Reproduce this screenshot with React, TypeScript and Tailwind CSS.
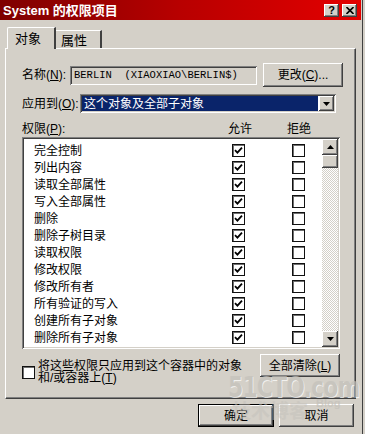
import React from "react";

const sunken =
  "shadow-[inset_1px_1px_0_#808080,inset_-1px_-1px_0_#ffffff,inset_2px_2px_0_#404040,inset_-2px_-2px_0_#d4d0c8]";
const raised =
  "shadow-[inset_-1px_-1px_0_#404040,inset_1px_1px_0_#ffffff,inset_-2px_-2px_0_#808080,inset_2px_2px_0_#d4d0c8]";

function Check({ checked }: { checked: boolean }) {
  return (
    <div className="w-[13px] h-[13px] bg-white border border-[#111] shadow-[inset_1px_1px_0_#707070] flex items-center justify-center">
      {checked && (
        <svg width="9" height="9" viewBox="0 0 9 9">
          <path d="M1 4.2 L3.4 6.6 L8 1.6" stroke="#000" strokeWidth="1.8" fill="none" />
        </svg>
      )}
    </div>
  );
}

function Arrow({ up }: { up: boolean }) {
  return (
    <div className={`w-[16px] h-[16px] bg-[#d4d0c8] ${raised} flex items-center justify-center`}>
      <svg width="7" height="4" viewBox="0 0 7 4">
        {up ? <path d="M3.5 0 L7 4 L0 4 Z" fill="#000" /> : <path d="M0 0 L7 0 L3.5 4 Z" fill="#000" />}
      </svg>
    </div>
  );
}

const rows = [
  "完全控制",
  "列出内容",
  "读取全部属性",
  "写入全部属性",
  "删除",
  "删除子树目录",
  "读取权限",
  "修改权限",
  "修改所有者",
  "所有验证的写入",
  "创建所有子对象",
  "删除所有子对象",
];

export default function App() {
  return (
    <div className="relative w-[365px] h-[434px] overflow-hidden bg-[#d4d0c8] text-black text-[12px] leading-none font-['Liberation_Sans','Noto_Sans_CJK_SC',sans-serif]">
      <div className="w-[363px] h-[434px] border-r border-[#404040] flex flex-col">
        {/* Title bar */}
        <div className="h-[20px] w-[361px] bg-gradient-to-r from-[#7e0000] via-[#b80000] to-[#e40000] flex items-center pl-[3px] pr-[4px]">
          <span className="text-white font-bold text-[13px]">System 的权限项目</span>
          <div className="ml-auto flex gap-[3px] items-center">
            <div className={`w-[15px] h-[13px] bg-[#d4d0c8] ${raised} flex items-center justify-center text-[11px] font-bold`}>?</div>
            <div className={`w-[15px] h-[13px] bg-[#d4d0c8] ${raised} flex items-center justify-center`}>
              <svg width="8" height="7" viewBox="0 0 8 7">
                <path d="M0.5 0 L7.5 7 M7.5 0 L0.5 7" stroke="#000" strokeWidth="1.6" />
              </svg>
            </div>
          </div>
        </div>

        {/* Body */}
        <div className="pl-[5px] pt-[7px] flex flex-col">
          {/* Tabs */}
          <div className="flex items-end pl-[2px] h-[21px]">
            <div className="relative z-10 -mb-px h-[22px] w-[49px] bg-[#d4d0c8] border-t border-l border-white border-r-2 border-r-[#404040] rounded-tl-[2px] pl-[7px] pt-[4px] text-[13px]">
              对象
            </div>
            <div className="h-[18px] w-[46px] bg-[#d4d0c8] border-t border-white border-r-2 border-r-[#404040] pl-[5px] pt-[3px] text-[13px]">
              属性
            </div>
          </div>

          {/* Panel */}
          <div className="w-[351px] h-[351px] border-t border-l border-white border-r border-b border-r-[#404040] border-b-[#404040] shadow-[inset_-1px_-1px_0_#808080] pl-[16px] flex flex-col">
            {/* Name row */}
            <div className="mt-[14px] h-[24px] flex items-center">
              <div className="w-[48px]">
                名称(<span className="underline">N</span>):
              </div>
              <div className={`w-[187px] h-[19px] ${sunken} bg-[#d4d0c8] flex items-center pl-[4px] pt-[1px] font-['Liberation_Mono',monospace] text-[10.5px] whitespace-pre`}>
                BERLIN  (XIAOXIAO\BERLIN$)
              </div>
              <div className={`ml-[6px] w-[80px] h-[24px] ${raised} bg-[#d4d0c8] flex items-center justify-center`}>
                更改(<span className="underline">C</span>)...
              </div>
            </div>

            {/* Apply row */}
            <div className="mt-[7px] h-[19px] flex items-center">
              <div className="w-[58px]">
                应用到(<span className="underline">O</span>):
              </div>
              <div className={`w-[256px] h-[19px] ${sunken} bg-white flex items-stretch p-[2px]`}>
                <div className="flex-1 bg-[#0a246a] text-white flex items-center pl-[2px] mr-[1px]">这个对象及全部子对象</div>
                <div className={`w-[15px] bg-[#d4d0c8] ${raised} flex items-center justify-center`}>
                  <svg width="7" height="4" viewBox="0 0 7 4">
                    <path d="M0 0 L7 0 L3.5 4 Z" fill="#000" />
                  </svg>
                </div>
              </div>
            </div>

            {/* Header */}
            <div className="mt-[8px] h-[16px] flex items-center">
              <div className="w-[206px]">
                权限(<span className="underline">P</span>):
              </div>
              <div className="w-[59px]">允许</div>
              <div>拒绝</div>
            </div>

            {/* List */}
            <div className={`w-[318px] h-[212px] ${sunken} bg-white flex p-[2px]`}>
              <div className="flex-1 flex flex-col pt-[3px] pl-[10px]">
                {rows.map((r) => (
                  <div key={r} className="h-[17px] flex items-center">
                    <div className="w-[198px]">{r}</div>
                    <Check checked />
                    <div className="w-[47px]" />
                    <Check checked={false} />
                  </div>
                ))}
              </div>
              <div className="w-[16px] flex flex-col">
                <Arrow up />
                <div className={`w-[16px] h-[13px] bg-[#d4d0c8] ${raised}`} />
                <div className="flex-1 bg-[repeating-conic-gradient(#ffffff_0_25%,#d4d0c8_0_50%)] bg-[length:2px_2px]" />
                <Arrow up={false} />
              </div>
            </div>

            {/* Bottom row */}
            <div className="mt-[5px] h-[31px] flex items-start">
              <div className="mt-[12px] w-[13px] h-[13px] bg-white border border-[#111] shadow-[inset_1px_1px_0_#707070]" />
              <div className="ml-[3px] mt-[6px] w-[216px] leading-[12px]">
                <div>将这些权限只应用到这个容器中的对象</div>
                <div>
                  和/或容器上(<span className="underline">T</span>)
                </div>
              </div>
              <div className={`ml-[6px] w-[80px] h-[23px] ${raised} bg-[#d4d0c8] flex items-center justify-center`}>
                全部清除(<span className="underline">L</span>)
              </div>
            </div>
          </div>

          {/* Dialog buttons */}
          <div className="mt-[5px] flex pl-[193px]">
            <div className="w-[76px] h-[23px] border border-black">
              <div className={`w-full h-full ${raised} bg-[#d4d0c8] flex items-center justify-center`}>确定</div>
            </div>
            <div className={`ml-[5px] w-[75px] h-[23px] ${raised} bg-[#d4d0c8] flex items-center justify-center`}>取消</div>
          </div>
        </div>
      </div>

      {/* Watermark */}
      <div className="absolute left-[228px] top-[374px] origin-left scale-x-[0.78] text-[28px] font-bold tracking-[-1px] text-[#c4c1bb] opacity-70 pointer-events-none font-['DejaVu_Sans',sans-serif] [text-shadow:1px_1px_0_#ffffff]">
        51CTO.com
      </div>
      <div className="absolute left-[232px] top-[400px] text-[19px] font-bold text-[#c4c1bb] opacity-50 pointer-events-none font-['Noto_Sans_CJK_SC',sans-serif]">
        技术博客
      </div>
      <div className="absolute left-[316px] top-[398px] text-[11px] font-bold text-[#c4c1bb] opacity-70 pointer-events-none">
        Blog
      </div>
    </div>
  );
}
